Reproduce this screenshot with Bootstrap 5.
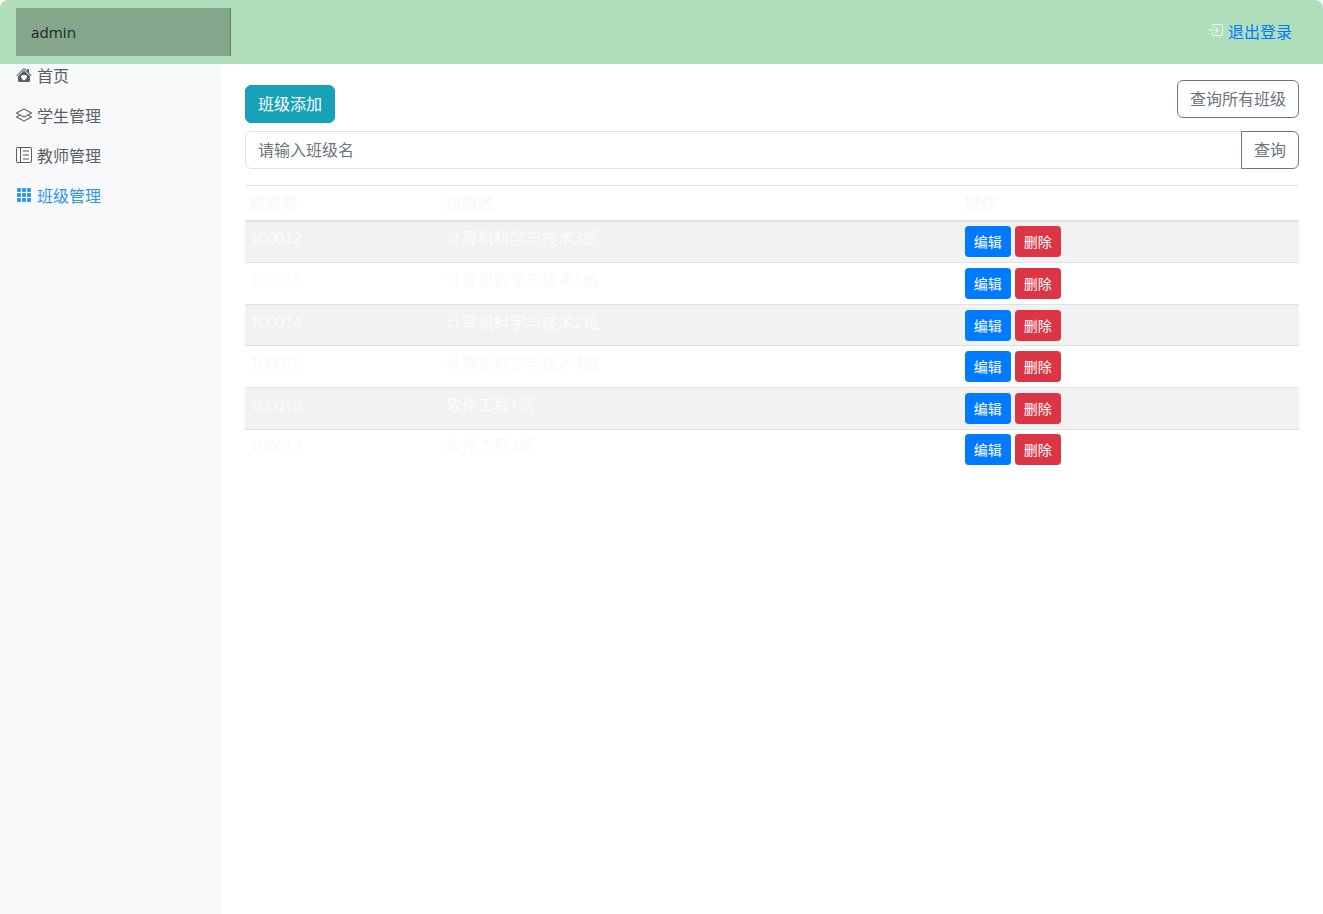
<!DOCTYPE html>
<html lang="zh">
<head>
<meta charset="utf-8">
<title>班级管理</title>
<link rel="stylesheet" href="https://cdn.jsdelivr.net/npm/bootstrap@5.3.0/dist/css/bootstrap.min.css">
<style>
html, body { height: 100%; }
body { font-family: "Open Sans", "Noto Sans CJK SC", sans-serif; color: #212529; background: #fff; overflow: hidden; }
.top-bar { height: 64px; background: #b1dfbb; border-radius: 8px 8px 0 0; position: relative; z-index: 2; }
.brand-box { width: 215px; height: 48px; margin-left: 16px; padding-left: 15px; background: #84a68b; border-right: 1px solid #5f7f66; color: #212529; font-size: 15.2px; text-decoration: none; }
.out-link { margin-right: 31px; color: #007bff; text-decoration: none; }
.out-link svg { color: #e8f6ec; margin-bottom: 6px; margin-right: 1px; }
.shell { height: calc(100% - 64px); }
.side-rail { width: 221px; flex: none; background: #f8f9fb; margin-top: -8px; }
.rail-link { padding: 8px 16px; color: #5a5f64; height: 40px; line-height: 24px; text-decoration: none; white-space: nowrap; }
.rail-link svg { margin-right: 5px; vertical-align: -1px; }
.rail-link.is-on { color: #2f96e8; }
.work-area { padding: 16px 24px; min-width: 0; }
.add-btn { margin-top: 5px; background: #17a2b8; border-color: #17a2b8; color: #fff; }
.add-btn:hover { background: #17a2b8; border-color: #17a2b8; color: #fff; }
.query-field { color: #495057; }
.query-field::placeholder { color: #6c757d; }
.data-grid { margin-top: 16px; table-layout: fixed; --bs-table-color: #f8f9fa; --bs-table-striped-color: #fbfbfb; --bs-table-striped-bg: #f2f2f2; --bs-table-border-color: #dee2e6; color: #f8f9fa; }
.data-grid th, .data-grid td { padding: 4.8px; vertical-align: top; border-bottom-width: 0; border-top: 1px solid #dee2e6; line-height: 24px; }
.data-grid thead th { border-bottom: 2px solid #dee2e6; font-weight: 700; }
.data-grid tbody tr:first-child td { border-top: 0; }
.data-grid > :not(:first-child) { border-top: 0; }
.col-id { width: 196px; }
.col-name { width: 519px; }
.id-text { letter-spacing: -.55px; }
.mini-btn { font-size: 14px; height: 31px; line-height: 21px; padding: 4px 8px; width: 46px; border-radius: 3.2px; }
.mini-blue { background: #007bff; border-color: #007bff; color: #fff; }
.mini-red { background: #dc3545; border-color: #dc3545; color: #fff; }
</style>
</head>
<body>
<header class="top-bar d-flex align-items-center justify-content-between">
  <a class="brand-box d-flex align-items-center" href="#">admin</a>
  <a class="out-link" href="#"><svg width="16" height="16" viewBox="0 0 16 16" fill="currentColor"><path d="M6 3.5a.5.5 0 0 1 .5-.5h8a.5.5 0 0 1 .5.5v9a.5.5 0 0 1-.5.5h-8a.5.5 0 0 1-.5-.5v-2a.5.5 0 0 0-1 0v2A1.5 1.5 0 0 0 6.5 14h8a1.5 1.5 0 0 0 1.5-1.5v-9A1.5 1.5 0 0 0 14.5 2h-8A1.5 1.5 0 0 0 5 3.5v2a.5.5 0 0 0 1 0v-2z"/><path d="M11.854 8.354a.5.5 0 0 0 0-.708l-3-3a.5.5 0 1 0-.708.708L10.293 7.5H1.5a.5.5 0 0 0 0 1h8.793l-2.147 2.146a.5.5 0 0 0 .708.708l3-3z"/></svg> 退出登录</a>
</header>
<div class="shell d-flex">
  <nav class="side-rail d-flex flex-column">
    <a class="rail-link d-block" href="#"><svg width="16" height="16" viewBox="0 0 16 16" fill="currentColor"><path d="M7.293 1.5a1 1 0 0 1 1.414 0L11 3.793V2.5a.5.5 0 0 1 .5-.5h1a.5.5 0 0 1 .5.5v3.293l2.354 2.353a.5.5 0 0 1-.708.708L8 2.207l-6.646 6.647a.5.5 0 1 1-.708-.708L7.293 1.5Z"/><path fill-rule="evenodd" d="m14 9.293-6-6-6 6V13.5A1.5 1.5 0 0 0 3.5 15h9a1.5 1.5 0 0 0 1.5-1.5V9.293Zm-6-.811c1.664-1.673 5.825 1.254 0 5.018-5.825-3.764-1.664-6.691 0-5.018Z"/></svg>首页</a>
    <a class="rail-link d-block" href="#"><svg width="16" height="16" viewBox="0 0 16 16" fill="currentColor"><path d="M8.235 1.559a.5.5 0 0 0-.47 0l-7.5 4a.5.5 0 0 0 0 .882L3.188 8 .264 9.559a.5.5 0 0 0 0 .882l7.5 4a.5.5 0 0 0 .47 0l7.5-4a.5.5 0 0 0 0-.882L12.813 8l2.922-1.559a.5.5 0 0 0 0-.882l-7.5-4zm3.515 7.008L14.438 10 8 13.433 1.562 10 4.25 8.567l3.515 1.874a.5.5 0 0 0 .47 0l3.515-1.874zM8 9.433 1.562 6 8 2.567 14.438 6 8 9.433z"/></svg>学生管理</a>
    <a class="rail-link d-block" href="#"><svg width="16" height="16" viewBox="0 0 16 16" fill="currentColor"><path d="M2 0a2 2 0 0 0-2 2v12a2 2 0 0 0 2 2h12a2 2 0 0 0 2-2V2a2 2 0 0 0-2-2H2zM1 2a1 1 0 0 1 1-1h2v14H2a1 1 0 0 1-1-1V2zm4 13V1h9a1 1 0 0 1 1 1v12a1 1 0 0 1-1 1H5z"/><path d="M7 3.5h6v1H7zM7 7.5h6v1H7zM7 11.5h6v1H7z"/></svg>教师管理</a>
    <a class="rail-link is-on d-block" href="#"><svg width="16" height="16" viewBox="0 0 16 16" fill="currentColor"><path d="M1 2a1 1 0 0 1 1-1h2a1 1 0 0 1 1 1v2a1 1 0 0 1-1 1H2a1 1 0 0 1-1-1V2zm5 0a1 1 0 0 1 1-1h2a1 1 0 0 1 1 1v2a1 1 0 0 1-1 1H7a1 1 0 0 1-1-1V2zm5 0a1 1 0 0 1 1-1h2a1 1 0 0 1 1 1v2a1 1 0 0 1-1 1h-2a1 1 0 0 1-1-1V2zM1 7a1 1 0 0 1 1-1h2a1 1 0 0 1 1 1v2a1 1 0 0 1-1 1H2a1 1 0 0 1-1-1V7zm5 0a1 1 0 0 1 1-1h2a1 1 0 0 1 1 1v2a1 1 0 0 1-1 1H7a1 1 0 0 1-1-1V7zm5 0a1 1 0 0 1 1-1h2a1 1 0 0 1 1 1v2a1 1 0 0 1-1 1h-2a1 1 0 0 1-1-1V7zM1 12a1 1 0 0 1 1-1h2a1 1 0 0 1 1 1v2a1 1 0 0 1-1 1H2a1 1 0 0 1-1-1v-2zm5 0a1 1 0 0 1 1-1h2a1 1 0 0 1 1 1v2a1 1 0 0 1-1 1H7a1 1 0 0 1-1-1v-2zm5 0a1 1 0 0 1 1-1h2a1 1 0 0 1 1 1v2a1 1 0 0 1-1 1h-2a1 1 0 0 1-1-1v-2z"/></svg>班级管理</a>
  </nav>
  <main class="work-area flex-grow-1">
    <div class="d-flex justify-content-between align-items-start">
      <button type="button" class="btn add-btn">班级添加</button>
      <button type="button" class="btn btn-outline-secondary">查询所有班级</button>
    </div>
    <div class="input-group mt-2">
      <input type="text" class="form-control query-field" placeholder="请输入班级名">
      <button type="button" class="btn btn-outline-secondary">查询</button>
    </div>
    <table class="table table-striped data-grid">
      <thead><tr><th class="col-id">班级号</th><th class="col-name">班级名</th><th>操作</th></tr></thead>
      <tbody>
        <tr><td><span class="id-text">100012</span></td><td>计算机科学与技术3班</td><td><div class="d-flex gap-1"><button class="btn mini-btn mini-blue">编辑</button><button class="btn mini-btn mini-red">删除</button></div></td></tr>
        <tr><td><span class="id-text">100013</span></td><td>计算机科学与技术1班</td><td><div class="d-flex gap-1"><button class="btn mini-btn mini-blue">编辑</button><button class="btn mini-btn mini-red">删除</button></div></td></tr>
        <tr><td><span class="id-text">100014</span></td><td>计算机科学与技术2班</td><td><div class="d-flex gap-1"><button class="btn mini-btn mini-blue">编辑</button><button class="btn mini-btn mini-red">删除</button></div></td></tr>
        <tr><td><span class="id-text">100015</span></td><td>计算机科学与技术4班</td><td><div class="d-flex gap-1"><button class="btn mini-btn mini-blue">编辑</button><button class="btn mini-btn mini-red">删除</button></div></td></tr>
        <tr><td><span class="id-text">100016</span></td><td>软件工程1班</td><td><div class="d-flex gap-1"><button class="btn mini-btn mini-blue">编辑</button><button class="btn mini-btn mini-red">删除</button></div></td></tr>
        <tr><td><span class="id-text">100017</span></td><td>软件工程2班</td><td><div class="d-flex gap-1"><button class="btn mini-btn mini-blue">编辑</button><button class="btn mini-btn mini-red">删除</button></div></td></tr>
      </tbody>
    </table>
  </main>
</div>
<script src="https://cdn.jsdelivr.net/npm/bootstrap@5.3.0/dist/js/bootstrap.bundle.min.js"></script>
</body>
</html>
